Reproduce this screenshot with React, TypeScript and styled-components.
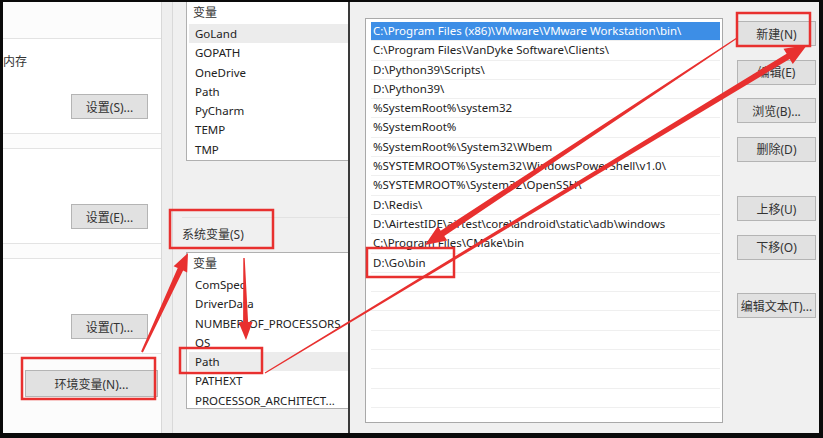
import React from "react";
import styled, { createGlobalStyle } from "styled-components";

const FONT = `"Noto Sans", "Noto Sans CJK SC", sans-serif`;

const Global = createGlobalStyle`
  *, *::before, *::after { box-sizing: border-box; }
  html, body { margin: 0; padding: 0; background: #0a0a0a; }
  body { font-family: ${FONT}; }
`;

const Frame = styled.div`
  position: relative;
  width: 823px;
  height: 438px;
  padding: 2px 4px 5px 3px;
  background: #0a0a0a;
  display: flex;
  overflow: hidden;
  font-family: ${FONT};
  font-size: 11.5px;
  color: #222;
`;

/* ---------- left: system properties page ---------- */
const LeftPanel = styled.div`
  width: 159px;
  flex: none;
  background: #fcfcfc;
  border-right: 1px solid #d8d8d8;
  display: flex;
  flex-direction: column;
  padding-top: 36px;
  gap: 14px;
`;

const Group = styled.div`
  height: 96px;
  background: #fff;
  border-top: 1px solid #e3e3e3;
  border-bottom: 1px solid #e3e3e3;
  display: flex;
  flex-direction: column;
  padding: 14px 13px 0 0;
`;

const Caption = styled.div`
  height: 18px;
  line-height: 18px;
  font-size: 12px;
  color: #333;
  align-self: stretch;
  white-space: nowrap;
`;

const WinButton = styled.div<{ $w?: number; $h?: number }>`
  width: ${(p) => p.$w ?? 77}px;
  height: ${(p) => p.$h ?? 25}px;
  flex: none;
  background: #e1e1e1;
  border: 1px solid #b4b4b4;
  display: flex;
  align-items: center;
  justify-content: center;
  font-size: 12px;
  color: #333;
  white-space: nowrap;
`;

const GroupButton = styled(WinButton)`
  align-self: flex-end;
  margin-top: 23px;
`;

const EnvButton = styled(WinButton)`
  align-self: flex-end;
  margin: 2px 3px 0 0;
`;

const Strip = styled.div`
  width: 11px;
  flex: none;
  background: #eeeeee;
  border-right: 1px solid #d9d9d9;
`;

/* ---------- middle: environment variables dialog ---------- */
const MiddlePanel = styled.div`
  width: 175px;
  flex: none;
  background: #f0f0f0;
  padding-left: 9px;
  display: flex;
  flex-direction: column;
`;

const VarList = styled.div<{ $h: number; $top?: boolean }>`
  margin-left: 4px;
  height: ${(p) => p.$h}px;
  flex: none;
  background: #fff;
  border: 1px solid #b0b0b0;
  border-right: none;
  border-top: ${(p) => (p.$top ? "1px solid #b0b0b0" : "none")};
  overflow: hidden;
`;

const VarHeader = styled.div`
  height: 22px;
  line-height: 22px;
  padding-left: 6px;
  font-size: 12px;
  color: #333;
`;

const VarRow = styled.div<{ $active?: boolean }>`
  height: 19.3px;
  line-height: 19.3px;
  padding-left: 6px;
  margin-left: 2px;
  background: ${(p) => (p.$active ? "#ececec" : "transparent")};
  white-space: nowrap;
  overflow: hidden;
  text-overflow: clip;
`;

const Rule = styled.div`
  height: 1px;
  margin-top: 56px;
  background: #e2e2e2;
`;

const SectionLabel = styled.div`
  margin-top: 8px;
  height: 18px;
  line-height: 18px;
  font-size: 12px;
  color: #333;
`;

/* ---------- right: edit path dialog ---------- */
const RightDialog = styled.div`
  flex: 1;
  background: #f0f0f0;
  border-left: 2px solid #3a3a3a;
  padding: 16px 0 10px 15px;
  display: flex;
  gap: 14px;
`;

const PathList = styled.div`
  width: 358px;
  height: 405px;
  flex: none;
  background: #fff;
  border: 1px solid #a9a9a9;
  padding: 3px 2px 0 5px;
  overflow: hidden;
`;

const PathRow = styled.div<{ $selected?: boolean }>`
  height: 19.3px;
  line-height: 18.3px;
  padding-left: 2px;
  border-bottom: 1px solid #efefef;
  background: ${(p) => (p.$selected ? "#3d8ee6" : "transparent")};
  color: ${(p) => (p.$selected ? "#fff" : "#222")};
  white-space: nowrap;
  overflow: hidden;
`;

const ButtonColumn = styled.div`
  width: 79px;
  flex: none;
  padding-top: 3px;
  display: flex;
  flex-direction: column;
  gap: 13.5px;
`;

const SideButton = styled(WinButton)<{ $spaced?: number }>`
  width: 79px;
  margin-top: ${(p) => p.$spaced ?? 0}px;
`;

/* ---------- annotation overlay ---------- */
const Overlay = styled.svg`
  position: absolute;
  left: 0;
  top: 0;
  pointer-events: none;
`;

const RED = "#e8302f";

function arrowPoints(
  tx: number, ty: number, hx: number, hy: number,
  tailW: number, bodyW: number, headW: number, headL: number
) {
  const dx = hx - tx;
  const dy = hy - ty;
  const len = Math.hypot(dx, dy);
  const ux = dx / len, uy = dy / len;
  const nx = -uy, ny = ux;
  const bx = hx - ux * headL, by = hy - uy * headL;
  const pts = [
    [tx + (nx * tailW) / 2, ty + (ny * tailW) / 2],
    [bx + (nx * bodyW) / 2, by + (ny * bodyW) / 2],
    [bx + (nx * headW) / 2, by + (ny * headW) / 2],
    [hx, hy],
    [bx - (nx * headW) / 2, by - (ny * headW) / 2],
    [bx - (nx * bodyW) / 2, by - (ny * bodyW) / 2],
    [tx - (nx * tailW) / 2, ty - (ny * tailW) / 2],
  ];
  return pts.map(([x, y]) => `${x.toFixed(1)},${y.toFixed(1)}`).join(" ");
}

const arrows = [
  { t: [265, 373], h: [807, 45], tw: 1.2, bw: 6, hw: 18, hl: 22 },
  { t: [737, 38], h: [425, 245], tw: 1.2, bw: 6.5, hw: 17, hl: 21 },
  { t: [142, 352], h: [188, 253], tw: 2, bw: 6, hw: 15, hl: 18 },
  { t: [244, 258], h: [246, 340], tw: 1.5, bw: 5, hw: 14, hl: 18 },
];

const boxes = [
  { x: 22, y: 358, w: 133, h: 41 },
  { x: 170, y: 210, w: 103, h: 38 },
  { x: 180, y: 348, w: 82, h: 25 },
  { x: 367, y: 248, w: 87, h: 29 },
  { x: 737, y: 13, w: 73, h: 33 },
];

const userVars = ["GoLand", "GOPATH", "OneDrive", "Path", "PyCharm", "TEMP", "TMP"];
const sysVars = [
  "ComSpec",
  "DriverData",
  "NUMBER_OF_PROCESSORS",
  "OS",
  "Path",
  "PATHEXT",
  "PROCESSOR_ARCHITECT...",
];
const paths = [
  "C:\\Program Files (x86)\\VMware\\VMware Workstation\\bin\\",
  "C:\\Program Files\\VanDyke Software\\Clients\\",
  "D:\\Python39\\Scripts\\",
  "D:\\Python39\\",
  "%SystemRoot%\\system32",
  "%SystemRoot%",
  "%SystemRoot%\\System32\\Wbem",
  "%SYSTEMROOT%\\System32\\WindowsPowerShell\\v1.0\\",
  "%SYSTEMROOT%\\System32\\OpenSSH\\",
  "D:\\Redis\\",
  "D:\\AirtestIDE\\airtest\\core\\android\\static\\adb\\windows",
  "C:\\Program Files\\CMake\\bin",
  "D:\\Go\\bin",
];
const emptyRows = Array.from({ length: 9 }, (_, i) => i);

export default function App() {
  return (
    <>
      <Global />
      <Frame>
        <LeftPanel>
          <Group>
            <Caption>内存</Caption>
            <GroupButton>设置(S)...</GroupButton>
          </Group>
          <Group>
            <Caption />
            <GroupButton>设置(E)...</GroupButton>
          </Group>
          <Group>
            <Caption />
            <GroupButton>设置(T)...</GroupButton>
          </Group>
          <EnvButton $w={133} $h={27}>环境变量(N)...</EnvButton>
        </LeftPanel>
        <Strip />
        <MiddlePanel>
          <VarList $h={159}>
            <VarHeader>变量</VarHeader>
            {userVars.map((v, i) => (
              <VarRow key={v} $active={i === 0}>{v}</VarRow>
            ))}
          </VarList>
          <Rule />
          <SectionLabel>系统变量(S)</SectionLabel>
          <VarList $h={157} $top style={{ marginTop: 8 }}>
            <VarHeader>变量</VarHeader>
            {sysVars.map((v) => (
              <VarRow key={v} $active={v === "Path"}>{v}</VarRow>
            ))}
          </VarList>
        </MiddlePanel>
        <RightDialog>
          <PathList>
            {paths.map((p, i) => (
              <PathRow key={p} $selected={i === 0}>{p}</PathRow>
            ))}
            {emptyRows.map((i) => (
              <PathRow key={"e" + i} />
            ))}
          </PathList>
          <ButtonColumn>
            <SideButton>新建(N)</SideButton>
            <SideButton>编辑(E)</SideButton>
            <SideButton>浏览(B)...</SideButton>
            <SideButton>删除(D)</SideButton>
            <SideButton $spaced={21}>上移(U)</SideButton>
            <SideButton>下移(O)</SideButton>
            <SideButton $spaced={20}>编辑文本(T)...</SideButton>
          </ButtonColumn>
        </RightDialog>
        <Overlay width={823} height={438} viewBox="0 0 823 438">
          {boxes.map((b, i) => (
            <rect key={i} x={b.x} y={b.y} width={b.w} height={b.h} fill="none" stroke={RED} strokeWidth={2.5} />
          ))}
          {arrows.map((a, i) => (
            <polygon key={i} fill={RED} points={arrowPoints(a.t[0], a.t[1], a.h[0], a.h[1], a.tw, a.bw, a.hw, a.hl)} />
          ))}
        </Overlay>
      </Frame>
    </>
  );
}
